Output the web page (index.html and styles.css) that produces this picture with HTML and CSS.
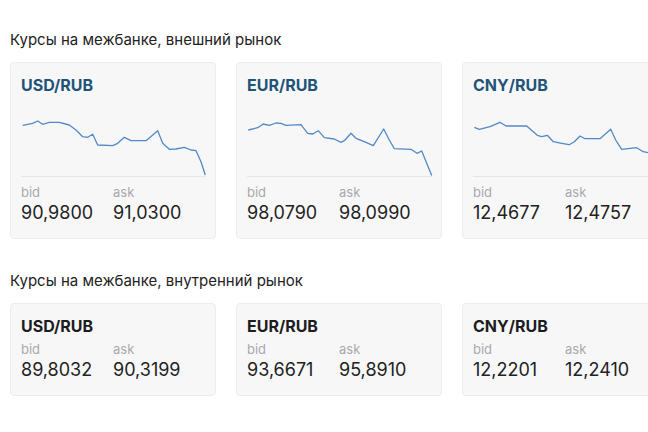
FILE: index.html
```html
<!DOCTYPE html>
<html lang="ru">
<head>
<meta charset="utf-8">
<title>Курсы на межбанке</title>
<link rel="stylesheet" href="styles.css">
</head>
<body>
<div class="page">
  <section class="section">
    <h2 class="heading">Курсы на межбанке, внешний рынок</h2>
    <div class="cards">
      <div class="card">
        <div class="title title-blue">USD/RUB</div>
        <svg class="chart" viewBox="0 0 185 60" width="185" height="60">
          <line x1="0" y1="59.5" x2="185" y2="59.5" class="axis"/>
          <polyline class="line" points="1.7,8.3 11.7,6.3 16.7,4 21.7,7.3 28.3,5.3 38.3,5.3 48.3,8 55,13 61.7,19.7 66.7,20.3 71.7,17.3 76.7,28 91.7,28.7 96.7,26.3 103.3,20.3 110,23.7 125,23.7 136.7,13.7 141.7,26.3 148.3,32.3 155,32 163.3,30.3 170,33 175,33.7 180,44.7 184.3,58"/>
        </svg>
        <div class="quotes quotes-chart">
          <div class="quote"><div class="label">bid</div><div class="value">90,9800</div></div>
          <div class="quote"><div class="label">ask</div><div class="value">91,0300</div></div>
        </div>
      </div>
      <div class="card">
        <div class="title title-blue">EUR/RUB</div>
        <svg class="chart" viewBox="0 0 185 60" width="185" height="60">
          <line x1="0" y1="59.5" x2="185" y2="59.5" class="axis"/>
          <polyline class="line" points="1.3,13 10.7,10.7 16.3,7 22.3,8.3 29,6 34,6.3 39,8.3 54,7.7 60.7,16.3 65.7,17 71.3,13.7 77.3,20.7 87.3,22 94,25.3 97.3,23.7 104,16.3 109,21.3 117.3,24.7 126.3,28.7 136.7,12 142.3,23 147.3,31.7 164,32.3 170,36.3 174.7,34 184.7,58.5"/>
        </svg>
        <div class="quotes quotes-chart">
          <div class="quote"><div class="label">bid</div><div class="value">98,0790</div></div>
          <div class="quote"><div class="label">ask</div><div class="value">98,0990</div></div>
        </div>
      </div>
      <div class="card">
        <div class="title title-blue">CNY/RUB</div>
        <svg class="chart" viewBox="0 0 185 60" width="185" height="60">
          <line x1="0" y1="59.5" x2="185" y2="59.5" class="axis"/>
          <polyline class="line" points="1.3,10.3 6.3,12.3 17,9.7 27,5.3 33,9 53.7,9 64.3,18.3 68.7,19.7 74.3,18.3 80.3,24.7 88.7,26.3 96.3,27.7 101.3,24.7 107,19 112,21.7 127,21.7 137.7,12.3 142.7,23 148.7,32.3 163.7,30.7 170.3,34.7 175.3,35.7 180,40 184.5,56"/>
        </svg>
        <div class="quotes quotes-chart">
          <div class="quote"><div class="label">bid</div><div class="value">12,4677</div></div>
          <div class="quote"><div class="label">ask</div><div class="value">12,4757</div></div>
        </div>
      </div>
    </div>
  </section>
  <section class="section section-second">
    <h2 class="heading">Курсы на межбанке, внутренний рынок</h2>
    <div class="cards">
      <div class="card">
        <div class="title">USD/RUB</div>
        <div class="quotes">
          <div class="quote"><div class="label">bid</div><div class="value">89,8032</div></div>
          <div class="quote"><div class="label">ask</div><div class="value">90,3199</div></div>
        </div>
      </div>
      <div class="card">
        <div class="title">EUR/RUB</div>
        <div class="quotes">
          <div class="quote"><div class="label">bid</div><div class="value">93,6671</div></div>
          <div class="quote"><div class="label">ask</div><div class="value">95,8910</div></div>
        </div>
      </div>
      <div class="card">
        <div class="title">CNY/RUB</div>
        <div class="quotes">
          <div class="quote"><div class="label">bid</div><div class="value">12,2201</div></div>
          <div class="quote"><div class="label">ask</div><div class="value">12,2410</div></div>
        </div>
      </div>
    </div>
  </section>
</div>
</body>
</html>
```
FILE: styles.css
```css
html, body {
  margin: 0;
  padding: 0;
  background: #ffffff;
  overflow: hidden;
}
body {
  font-family: Inter, "Noto Sans", "DejaVu Sans", sans-serif;
  color: #222222;
  width: 648px;
  height: 432px;
}
.page {
  padding: 30px 0 0 10px;
}
.section-second {
  margin-top: 32px;
}
.heading {
  margin: 0;
  font-size: 15px;
  line-height: 20px;
  font-weight: 400;
  color: #222222;
}
.cards {
  display: flex;
  gap: 20px;
  margin-top: 12px;
  width: 638px;
  overflow: hidden;
}
.card {
  flex: 0 0 auto;
  box-sizing: border-box;
  width: 206px;
  padding: 10px 10px 13px 10px;
  background: #f7f7f8;
  border: 1px solid #ececee;
  border-radius: 4px;
}
.title {
  font-size: 16px;
  line-height: 24px;
  font-weight: 700;
  color: #1d1d1f;
}
.title-blue {
  color: #1f5478;
}
.chart {
  display: block;
  margin-top: 20px;
  overflow: visible;
}
.axis {
  stroke: #e6e6e8;
  stroke-width: 1;
}
.line {
  fill: none;
  stroke: #5189c8;
  stroke-width: 1.3;
  stroke-linejoin: round;
}
.quotes {
  display: grid;
  grid-template-columns: 92px 92px;
  margin-top: 2px;
}
.quotes-chart {
  margin-top: 6px;
}
.label {
  font-size: 13px;
  line-height: 18px;
  color: #a9a9ae;
}
.value {
  font-size: 18px;
  line-height: 24px;
  color: #222222;
}
```
